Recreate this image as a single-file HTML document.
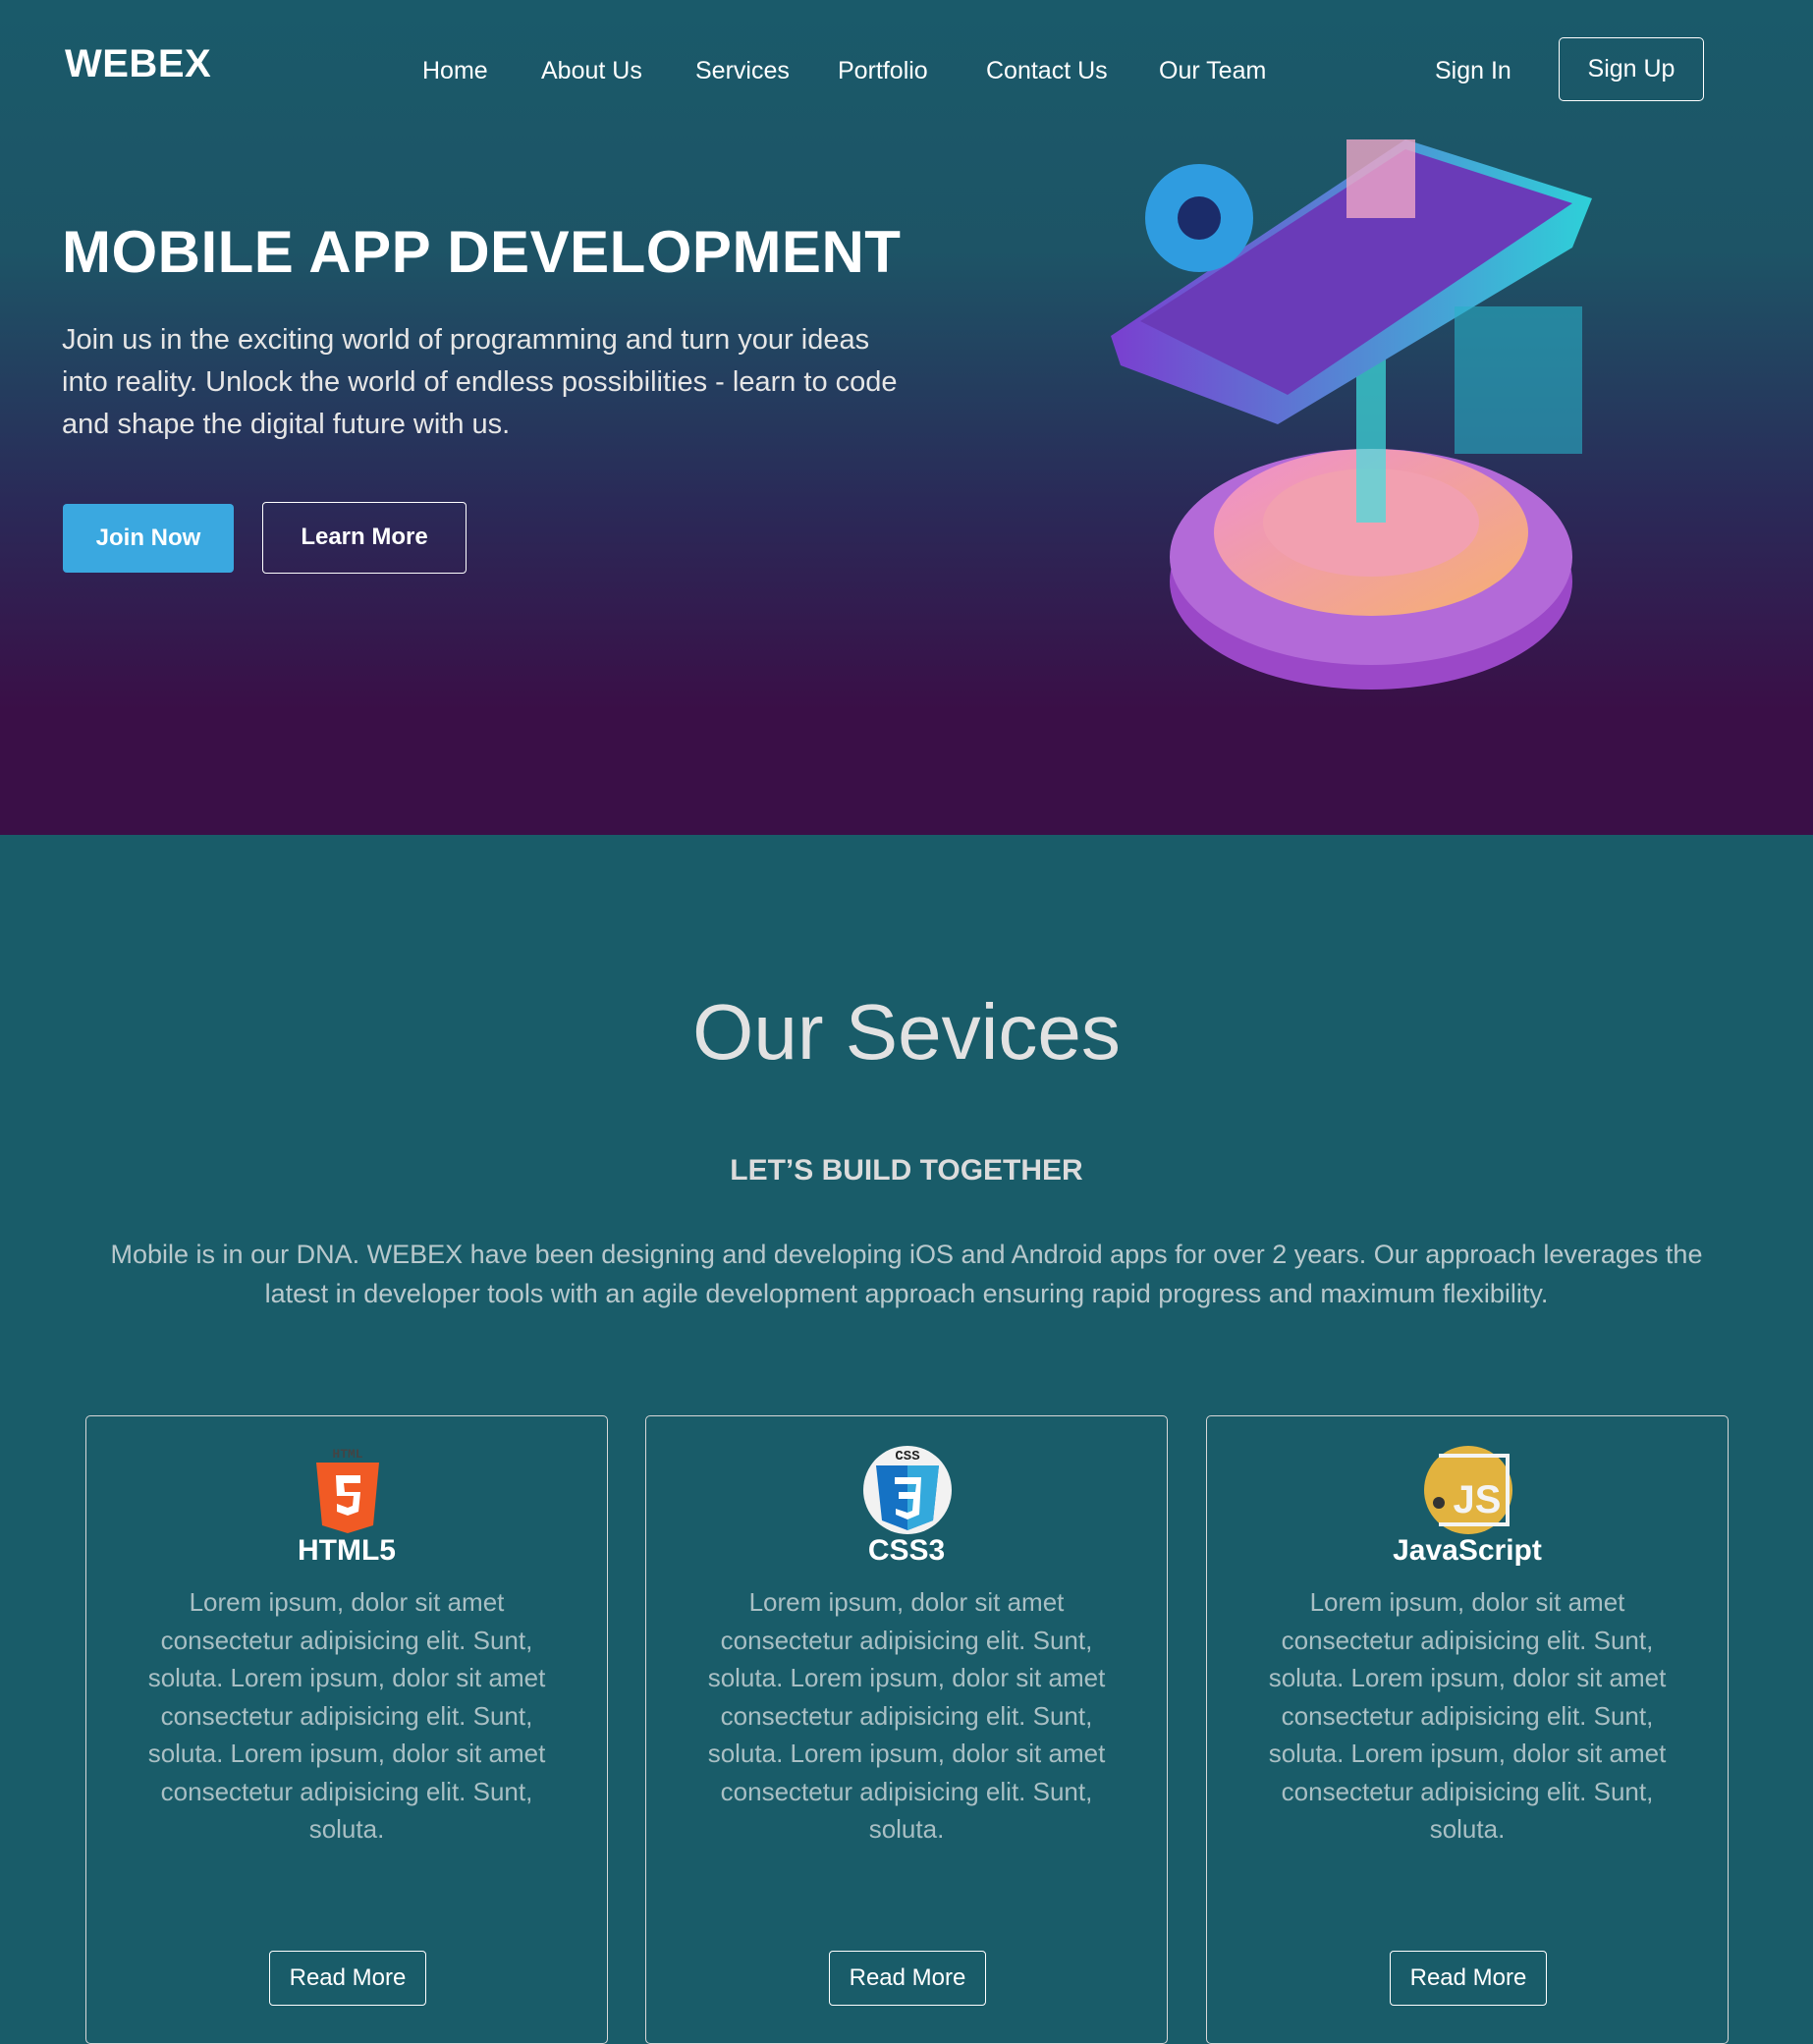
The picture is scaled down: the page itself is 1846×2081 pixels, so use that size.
<!DOCTYPE html>
<html><head><meta charset="utf-8"><style>
*{margin:0;padding:0;box-sizing:border-box}
body{width:1846px;height:2062px;overflow:hidden;background:#195c69;font-family:"Liberation Sans",sans-serif;color:#fff}
.hero{position:relative;height:850px;background:linear-gradient(180deg,#1a5a6a 0%,#1d5466 30%,#2a2a58 60%,#3a0f47 85%,#3a0f47 100%)}
.logo{position:absolute;left:66px;top:43px;font-size:40px;font-weight:bold;letter-spacing:0.5px}
.nav{position:absolute;top:58px;font-size:25px}
.nav span{position:absolute;white-space:nowrap}
.signup{position:absolute;left:1587px;top:38px;width:148px;height:65px;border:1.5px solid #fff;border-radius:5px;font-size:25px;text-align:center;line-height:62px}
h1{position:absolute;left:63px;top:222px;font-size:60px;font-weight:bold;letter-spacing:0.5px}
.lead{position:absolute;left:63px;top:325px;width:860px;font-size:29px;line-height:43px;color:#e6e6e6}
.b1{position:absolute;left:64px;top:513px;width:174px;height:70px;background:#3aa8e0;border-radius:4px;font-size:24px;font-weight:bold;text-align:center;line-height:70px}
.b2{position:absolute;left:267px;top:511px;width:208px;height:73px;border:1.5px solid #fff;border-radius:4px;font-size:24px;font-weight:bold;text-align:center;line-height:70px}
.h2{position:absolute;width:100%;top:1005px;text-align:center;font-size:80px;color:#e2e2e2}
.h3{position:absolute;width:100%;top:1175px;text-align:center;font-size:30px;font-weight:bold;color:#dcdcdc}
.p{position:absolute;left:80px;width:1686px;top:1257px;text-align:center;font-size:27px;line-height:40px;color:#b8c8cc}
.card{position:absolute;top:1441px;width:532px;height:640px;border:1.5px solid #d8d8d8;border-radius:5px;text-align:center}
.card .t{position:absolute;top:120px;width:100%;font-size:30px;font-weight:bold}
.card .d{position:absolute;top:170px;left:50px;right:50px;font-size:26px;line-height:38.5px;color:#a9bfc4}
.card .rm{position:absolute;left:186px;top:544px;width:160px;height:56px;border:1.5px solid #fff;border-radius:4px;font-size:24px;line-height:53px}
.ic{position:absolute;left:221px;top:30px;width:90px;height:90px}
</style></head><body>
<div class="hero">
<div class="logo">WEBEX</div>
<div class="nav"><span style="left:430px">Home</span><span style="left:551px">About Us</span><span style="left:708px">Services</span><span style="left:853px">Portfolio</span><span style="left:1004px">Contact Us</span><span style="left:1180px">Our Team</span><span style="left:1461px">Sign In</span></div>
<div class="signup">Sign Up</div>
<h1>MOBILE APP DEVELOPMENT</h1>
<div class="lead">Join us in the exciting world of programming and turn your ideas into reality. Unlock the world of endless possibilities - learn to code and shape the digital future with us.</div>
<div class="b1">Join Now</div><div class="b2">Learn More</div>
<svg style="position:absolute;left:1131px;top:112px" width="532" height="600" viewBox="0 0 532 600">
<defs><linearGradient id="g1" x1="0" y1="0" x2="1" y2="1"><stop offset="0" stop-color="#ee8fd0"/><stop offset="1" stop-color="#f5b070"/></linearGradient>
<linearGradient id="g2" x1="0" y1="0" x2="1" y2="0"><stop offset="0" stop-color="#7a3fd0"/><stop offset="1" stop-color="#2ed0d8"/></linearGradient></defs>
<ellipse cx="265" cy="480" rx="205" ry="110" fill="#9b48c8"/>
<ellipse cx="265" cy="455" rx="205" ry="110" fill="#b36ad8"/>
<ellipse cx="265" cy="430" rx="160" ry="85" fill="url(#g1)"/>
<ellipse cx="265" cy="420" rx="110" ry="55" fill="#f2a0b0"/>
<rect x="250" y="200" width="30" height="220" fill="#3ee0e0" opacity="0.7"/>
<polygon points="0,230 300,30 490,90 470,140 170,320 10,260" fill="url(#g2)"/>
<polygon points="30,215 300,40 470,95 180,290" fill="#6a3bb8"/>
<circle cx="90" cy="110" r="55" fill="#2f9ce0"/><circle cx="90" cy="110" r="22" fill="#1b2c6a"/>
<rect x="240" y="30" width="70" height="80" fill="#f0a8c8" opacity="0.8"/>
<rect x="350" y="200" width="130" height="150" fill="#2ab0c8" opacity="0.6"/>
</svg>
</div>
<div class="h2">Our Sevices</div>
<div class="h3">LET’S BUILD TOGETHER</div>
<div class="p">Mobile is in our DNA. WEBEX have been designing and developing iOS and Android apps for over 2 years. Our approach leverages the latest in developer tools with an agile development approach ensuring rapid progress and maximum flexibility.</div>

<div class="card" style="left:87px">
<svg class="ic" viewBox="0 0 90 90"><text x="45" y="12" font-size="13" font-weight="bold" fill="#444" text-anchor="middle" font-family="Liberation Mono">HTML</text><path d="M13 17h64l-6 64-26 8-26-8z" fill="#f15a24"/><path d="M33 30h25v8H41l1 9h16l-2 20-11 4-11-4v-8l11 4 5-2 1-10H34z" fill="#fff"/></svg>
<div class="t">HTML5</div>
<div class="d">Lorem ipsum, dolor sit amet consectetur adipisicing elit. Sunt, soluta. Lorem ipsum, dolor sit amet consectetur adipisicing elit. Sunt, soluta. Lorem ipsum, dolor sit amet consectetur adipisicing elit. Sunt, soluta.</div>
<div class="rm">Read More</div></div>

<div class="card" style="left:657px">
<svg class="ic" viewBox="0 0 90 90"><circle cx="45" cy="45" r="45" fill="#f2f2f2"/><text x="45" y="14" font-size="14" font-weight="bold" fill="#222" text-anchor="middle" font-family="Liberation Mono">CSS</text><path d="M13 20h64l-6 56-26 10-26-10z" fill="#1572c4"/><path d="M45 20h32l-6 56-26 10z" fill="#33a9dc"/><path d="M32 32h27l-2 38-12 5-12-5v-6l12 4 5-2 1-12H36v-7h17l1-8H32z" fill="#fff"/></svg>
<div class="t">CSS3</div>
<div class="d">Lorem ipsum, dolor sit amet consectetur adipisicing elit. Sunt, soluta. Lorem ipsum, dolor sit amet consectetur adipisicing elit. Sunt, soluta. Lorem ipsum, dolor sit amet consectetur adipisicing elit. Sunt, soluta.</div>
<div class="rm">Read More</div></div>

<div class="card" style="left:1228px">
<svg class="ic" viewBox="0 0 90 90"><circle cx="45" cy="45" r="45" fill="#e2b33f"/><path d="M15 10h70v70H15" fill="none" stroke="#f4f4f4" stroke-width="4"/><text x="54" y="68" font-size="40" font-weight="bold" fill="#f4f4f4" text-anchor="middle">JS</text><circle cx="15" cy="58" r="6" fill="#333"/></svg>
<div class="t">JavaScript</div>
<div class="d">Lorem ipsum, dolor sit amet consectetur adipisicing elit. Sunt, soluta. Lorem ipsum, dolor sit amet consectetur adipisicing elit. Sunt, soluta. Lorem ipsum, dolor sit amet consectetur adipisicing elit. Sunt, soluta.</div>
<div class="rm">Read More</div></div>
</body></html>
